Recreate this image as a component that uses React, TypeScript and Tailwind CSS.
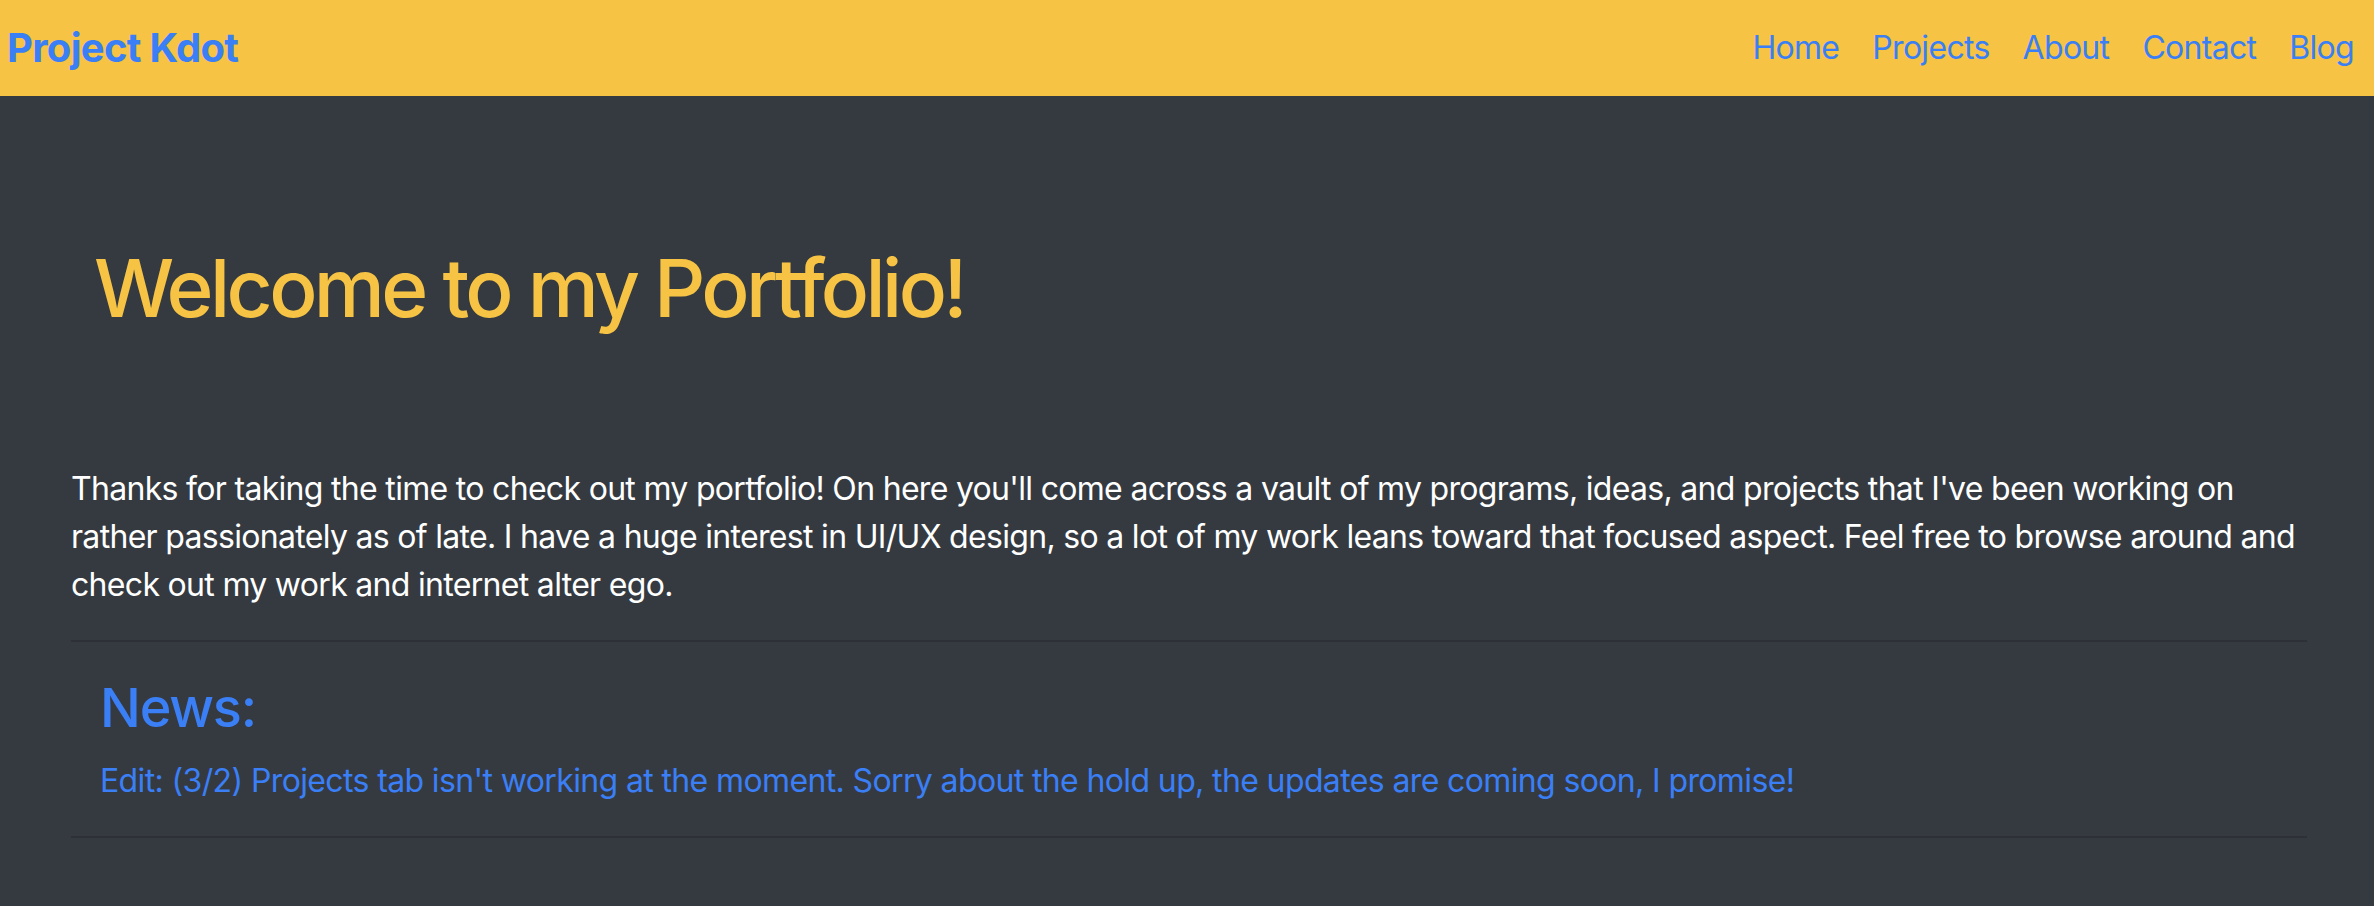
const links = ['Home', 'Projects', 'About', 'Contact', 'Blog'];

export default function App() {
  return (
    <div className="min-h-[906px] bg-[#353a41] font-['Inter',sans-serif] tracking-[-0.69px]">
      <nav className="flex h-[96px] items-center justify-between bg-[#f6c344] pl-[7px] pr-[20px]">
        <a href="#" className="text-[40px] font-bold tracking-[-0.7px] text-[#3a7ff6]">
          Project Kdot
        </a>
        <ul className="flex gap-[33px] text-[32px] tracking-[-0.7px] text-[#3a7ff6]">
          {links.map((l) => (
            <li key={l}>
              <a href="#">{l}</a>
            </li>
          ))}
        </ul>
      </nav>

      <main className="pl-[71px] pr-[67px]">
        <h1 className="pl-[23px] pt-[144px] text-[80px] font-medium leading-[96px] tracking-[-3.6px] text-[#f6c344]">
          Welcome to my Portfolio!
        </h1>
        <p className="mt-[129px] text-[32px] leading-[48px] text-white">
          Thanks for taking the time to check out my portfolio! On here you'll come across a vault of my
          programs, ideas, and projects that I've been working on rather passionately as of late. I have a
          huge interest in UI/UX design, so a lot of my work leans toward that focused aspect. Feel free to
          browse around and check out my work and internet alter ego.
        </p>
        <section className="mt-[31px] border-y-2 border-[#2d3137] px-[29px] pb-[31px] pt-[33px] text-[#3a7ff6]">
          <h3 className="text-[54px] font-medium leading-[65px] tracking-[-1.2px]">News:</h3>
          <p className="mt-[17px] text-[32px] leading-[48px] tracking-[-0.625px]">
            Edit: (3/2) Projects tab isn't working at the moment. Sorry about the hold up, the updates are
            coming soon, I promise!
          </p>
        </section>
      </main>
    </div>
  );
}
